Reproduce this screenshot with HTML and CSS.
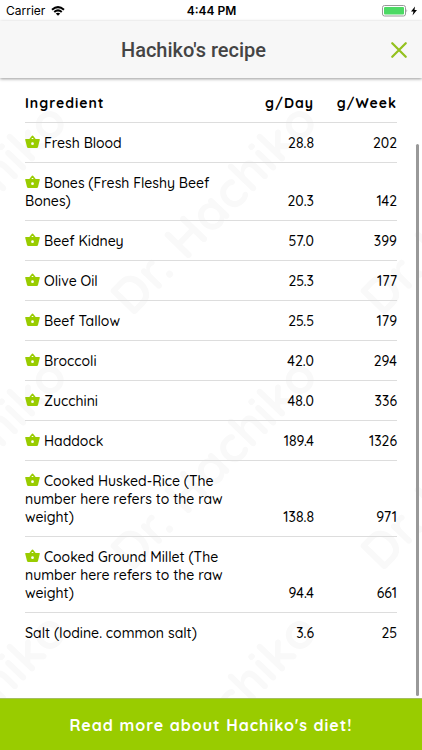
FILE: index.html
```
<!DOCTYPE html>
<html lang="en">
<head>
    <meta charset="UTF-8">
    <meta name="viewport" content="width=device-width, initial-scale=1.0">
    <title>Hachiko's recipe</title>
    <link rel="stylesheet" href="styles.css">
</head>
<body>
    <svg class="defs" aria-hidden="true">
        <symbol id="basket" viewBox="0 0 30 26">
            <path d="M9 10L15 2.500L21 10" fill="none" stroke="currentColor" stroke-width="3" stroke-linejoin="round"/>
            <path fill="currentColor" fill-rule="evenodd" d="M1.500 8H28.500Q30 8 29.600 9.500L26 24Q25.500 26 23.500 26H6.500Q4.500 26 4 24L.400 9.500Q0 8 1.500 8ZM15 14.500A2.700 2.700 0 1 0 15 20A2.700 2.700 0 1 0 15 14.500Z"/>
        </symbol>
    </svg>

    <div class="status-bar">
        <div class="carrier">
            <span>Carrier</span>
            <svg class="wifi" viewBox="0 0 28 20" aria-hidden="true">
                <path d="M2 7.500Q14 -3 26 7.500M6.500 12Q14 5.500 21.500 12" fill="none" stroke="#000" stroke-width="4"/>
                <path d="M9.500 15Q14 11.500 18.500 15L14 19.500Z"/>
            </svg>
        </div>
        <div class="clock">4:44 PM</div>
        <div class="power">
            <svg class="battery" viewBox="0 0 52 24" aria-hidden="true">
                <rect x="1" y="1" width="46" height="21" rx="4" fill="#fff" stroke="#999" stroke-width="2"/>
                <rect x="4" y="4" width="40" height="15" rx="2" fill="#4cd964"/>
                <path d="M49 8Q52 11.500 49 15Z" fill="#999"/>
            </svg>
            <svg class="bolt" viewBox="0 0 12 18" aria-hidden="true">
                <path d="M8 0L0 10H5L3 18L12 7H7Z"/>
            </svg>
        </div>
    </div>

    <header class="nav-bar">
        <h1>Hachiko's recipe</h1>
        <button class="close" type="button" aria-label="Close">
            <svg viewBox="0 0 16 16" aria-hidden="true">
                <path d="M2 2L14 14M14 2L2 14" fill="none" stroke="#94c11f" stroke-width="2" stroke-linecap="round"/>
            </svg>
        </button>
    </header>

    <main class="content">
        <svg class="watermark" aria-hidden="true">
            <defs>
                <pattern id="brand" width="250" height="255" patternUnits="userSpaceOnUse">
                    <g class="brand-text">
                        <text transform="translate(-118 240) rotate(-46)">Dr. Hachiko</text>
                        <text transform="translate(132 240) rotate(-46)">Dr. Hachiko</text>
                        <text transform="translate(-118 495) rotate(-46)">Dr. Hachiko</text>
                        <text transform="translate(132 495) rotate(-46)">Dr. Hachiko</text>
                    </g>
                </pattern>
            </defs>
            <rect width="100%" height="100%" fill="url(#brand)"/>
        </svg>

        <table class="recipe">
            <thead>
                <tr><th>Ingredient</th><th class="day">g/Day</th><th class="week">g/Week</th></tr>
            </thead>
            <tbody>
                <tr><td><svg class="basket"><use href="#basket"/></svg>Fresh Blood</td><td>28.8</td><td>202</td></tr>
                <tr><td><svg class="basket"><use href="#basket"/></svg>Bones (Fresh Fleshy Beef Bones)</td><td>20.3</td><td>142</td></tr>
                <tr><td><svg class="basket"><use href="#basket"/></svg>Beef Kidney</td><td>57.0</td><td>399</td></tr>
                <tr><td><svg class="basket"><use href="#basket"/></svg>Olive Oil</td><td>25.3</td><td>177</td></tr>
                <tr><td><svg class="basket"><use href="#basket"/></svg>Beef Tallow</td><td>25.5</td><td>179</td></tr>
                <tr><td><svg class="basket"><use href="#basket"/></svg>Broccoli</td><td>42.0</td><td>294</td></tr>
                <tr><td><svg class="basket"><use href="#basket"/></svg>Zucchini</td><td>48.0</td><td>336</td></tr>
                <tr><td><svg class="basket"><use href="#basket"/></svg>Haddock</td><td>189.4</td><td>1326</td></tr>
                <tr><td><svg class="basket"><use href="#basket"/></svg>Cooked Husked-Rice (The number here refers to the raw weight)</td><td>138.8</td><td>971</td></tr>
                <tr><td><svg class="basket"><use href="#basket"/></svg>Cooked Ground Millet (The number here refers to the raw weight)</td><td>94.4</td><td>661</td></tr>
                <tr><td>Salt (Iodine. common salt)</td><td>3.6</td><td>25</td></tr>
            </tbody>
        </table>
        <div class="scroll-thumb"></div>
    </main>

    <button class="read-more" type="button">Read more about Hachiko's diet!</button>
</body>
</html>
```
FILE: styles.css
```
* {
    box-sizing: border-box;
}
body {
    display: flex;
    flex-direction: column;
    min-height: 100vh;
    margin: 0;
    font-family: Quicksand, Lato, sans-serif;
    font-size: 14px;
    line-height: 18px;
    color: #000;
    background-color: #fff;
}
.defs {
    position: absolute;
    width: 0;
    height: 0;
}

/* status bar */
.status-bar {
    display: grid;
    grid-template-columns: 1fr auto 1fr;
    align-items: center;
    height: 21px;
    padding: 0 5px 0 6px;
    font-family: Inter, sans-serif;
    font-size: 12px;
    color: #000;
}
.carrier, .power {
    display: flex;
    align-items: center;
    gap: 6px;
}
.power {
    justify-content: flex-end;
    gap: 3px;
}
.clock {
    font-weight: 600;
}
.wifi {
    width: 14px;
    height: 10px;
}
.battery {
    width: 26px;
    height: 12px;
}
.bolt {
    width: 6px;
    height: 10px;
}

/* title bar */
.nav-bar {
    display: flex;
    align-items: center;
    height: 57px;
    background-color: #f7f7f7;
    box-shadow: 0 1px 3px rgba(0, 0, 0, 0.4);
    z-index: 1;
}
.nav-bar h1 {
    flex: 1;
    margin: 0;
    font-family: Roboto, sans-serif;
    font-size: 20px;
    font-weight: 500;
    line-height: 24px;
    text-align: center;
    color: #444;
}
.close {
    width: 35px;
    height: 22px;
    padding: 2px 14px 2px 3px;
    border: none;
    background: none;
    cursor: pointer;
}
.close svg {
    display: block;
    width: 18px;
    height: 18px;
}

/* recipe */
.content {
    position: relative;
    flex: 1;
    padding: 5px 25px 0;
}
.watermark {
    position: absolute;
    top: 0;
    left: 0;
    width: 100%;
    height: 100%;
}
.brand-text {
    font-family: Quicksand, Lato, sans-serif;
    font-size: 50px;
    font-weight: 700;
    fill: #f9f9f9;
}
.recipe {
    position: relative;
    width: 100%;
    border-collapse: collapse;
}
.recipe th, .recipe td {
    padding: 11px 0 10px;
    border-bottom: 1px solid #ddd;
    font-weight: 500;
    text-align: right;
    vertical-align: bottom;
}
.recipe th {
    font-weight: 700;
    letter-spacing: 1px;
}
.recipe th:first-child, .recipe td:first-child {
    padding-right: 8px;
    text-align: left;
}
.recipe tr:last-child td {
    border-bottom: none;
}
.day {
    width: 76px;
}
.week {
    width: 83px;
}
.basket {
    width: 15px;
    height: 13px;
    margin-right: 4px;
    color: #9c0;
}
.scroll-thumb {
    position: absolute;
    top: 66px;
    right: 3px;
    bottom: 2px;
    width: 3px;
    border-radius: 2px;
    background-color: #999;
}

.read-more {
    height: 52px;
    border: none;
    border-top: 1px solid #a5bd62;
    font-family: inherit;
    font-size: 16px;
    font-weight: 700;
    letter-spacing: 1px;
    color: #fff;
    background-color: #9c0;
    cursor: pointer;
}
```
